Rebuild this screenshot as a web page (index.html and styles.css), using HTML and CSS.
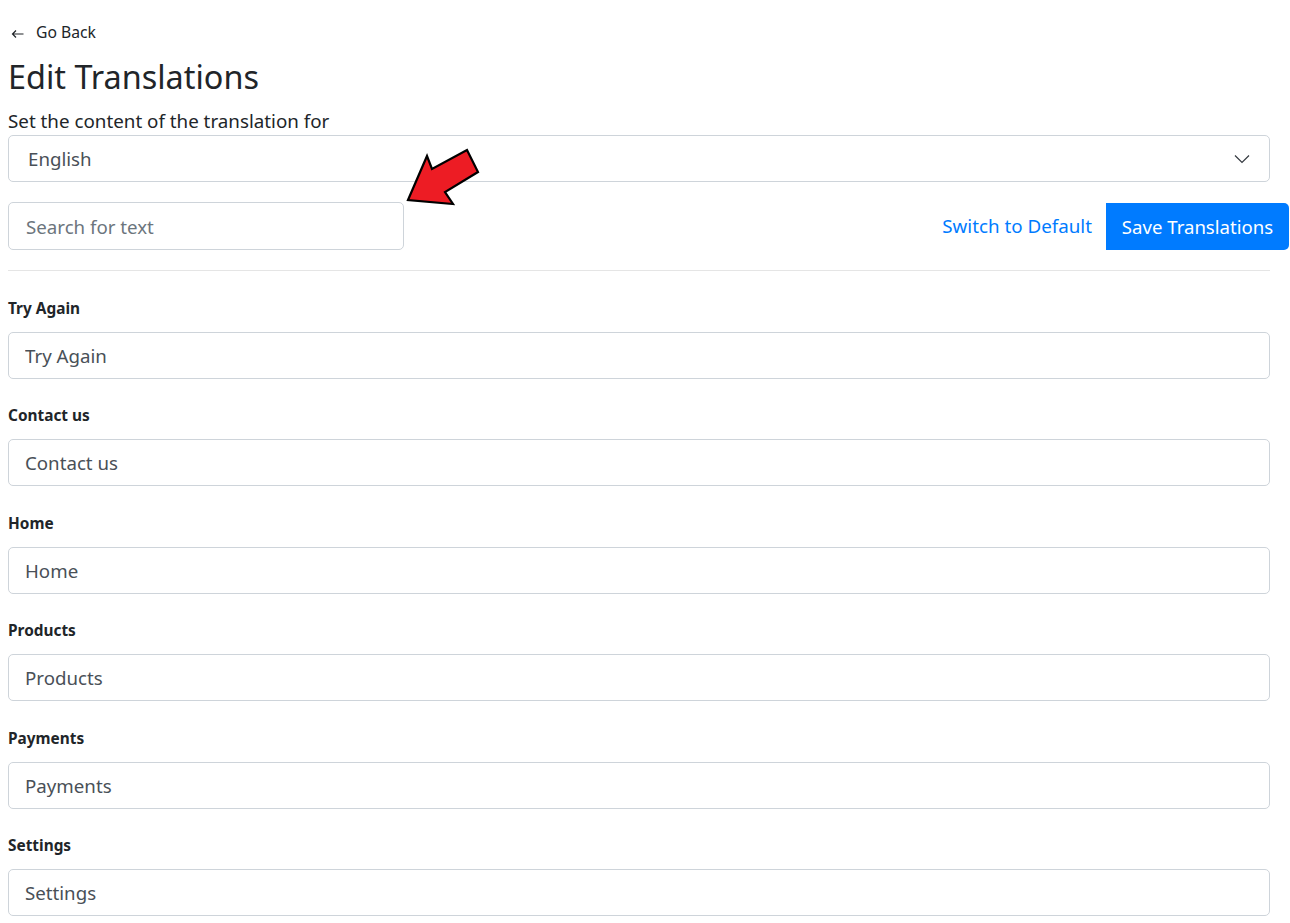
FILE: index.html
```html
<!DOCTYPE html>
<html lang="en">
<head>
<meta charset="utf-8">
<title>Edit Translations</title>
<link rel="stylesheet" href="styles.css">
</head>
<body>
<div class="page">
  <a class="back" href="#"><svg class="back-arrow" width="13" height="10" viewBox="0 0 13 10"><path d="M12.5 5 H1.5 M5 1.5 L1.5 5 L5 8.5" fill="none" stroke="#212529" stroke-width="1.2"/></svg><span>Go Back</span></a>
  <h1 class="title">Edit Translations</h1>
  <p class="subtitle">Set the content of the translation for</p>
  <div class="select">
    <span>English</span>
    <svg class="chev" width="16" height="10" viewBox="0 0 16 10"><path d="M1 1.5 L8 8.5 L15 1.5" fill="none" stroke="#343a40" stroke-width="1.2"/></svg>
  </div>
  <div class="toolbar">
    <input class="search" type="text" placeholder="Search for text">
    <div class="actions">
      <a class="link" href="#">Switch to Default</a>
      <button class="btn">Save Translations</button>
    </div>
    <svg class="pointer" width="90" height="70" viewBox="400 145 90 70">
      <polygon points="408,200 427,156 432,169 467,150 478,172 445,192 453,204" fill="#ed1c24" stroke="#000" stroke-width="2.2" stroke-linejoin="miter"/>
    </svg>
  </div>
  <hr class="rule">
  <div class="fields">
    <div class="field"><label>Try Again</label><input class="control" value="Try Again"></div>
    <div class="field"><label>Contact us</label><input class="control" value="Contact us"></div>
    <div class="field"><label>Home</label><input class="control" value="Home"></div>
    <div class="field"><label>Products</label><input class="control" value="Products"></div>
    <div class="field"><label>Payments</label><input class="control" value="Payments"></div>
    <div class="field"><label>Settings</label><input class="control" value="Settings"></div>
  </div>
</div>
</body>
</html>
```
FILE: styles.css
```css
* { box-sizing: border-box; }
html, body { margin: 0; padding: 0; background: #fff; }
body {
  font-family: "Noto Sans", "Open Sans", sans-serif;
  color: #212529;
  overflow: hidden;
}
.page {
  margin: 0 20px 0 8px;
  padding-top: 20px;
  position: relative;
}
.back {
  display: flex;
  align-items: center;
  gap: 12px;
  height: 24px;
  color: #212529;
  text-decoration: none;
  font-size: 15.7px;
}
.back-arrow { margin-left: 3px; margin-top: 3px; }
.title {
  margin: 12px 0 0;
  font-size: 32.4px;
  font-weight: 400;
  line-height: 40px;
}
.subtitle {
  margin: 12px 0 0;
  font-size: 18.8px;
  line-height: 27px;
}
.select {
  height: 47px;
  border: 1px solid #ced4da;
  border-radius: 5px;
  display: flex;
  align-items: center;
  justify-content: space-between;
  padding: 0 19px 0 19px;
  font-size: 18.7px;
  color: #495057;
}
.toolbar {
  margin-top: 20px;
  display: flex;
  align-items: center;
  justify-content: space-between;
  position: relative;
  margin-right: -19px;
}
.search {
  width: 396px;
  height: 48px;
  border: 1px solid #ced4da;
  border-radius: 5px;
  padding: 0 17px;
  font-family: inherit;
  font-size: 18.7px;
  color: #495057;
  outline: none;
}
.search::placeholder { color: #6c757d; }
.actions { display: flex; align-items: center; gap: 14px; }
.link {
  color: #007bff;
  text-decoration: none;
  font-size: 18.8px;
}
.btn {
  height: 47px;
  background: #007bff;
  color: #fff;
  border: none;
  border-radius: 0 5px 5px 0;
  padding: 0;
  font-family: inherit;
  font-size: 18.6px;
  width: 183px;
}
.pointer {
  position: absolute;
  left: 392px;
  top: -57px;
}
.rule {
  margin: 20px 0 0;
  border: 0;
  border-top: 1px solid #e5e5e5;
}
.fields { padding-top: 26.5px; display: flex; flex-direction: column; gap: 26.6px; }
.field { display: flex; flex-direction: column; gap: 12px; }
.field label {
  font-size: 15.4px;
  font-weight: 700;
  line-height: 22px;
}
.control {
  height: 47px;
  border: 1px solid #ced4da;
  border-radius: 5px;
  padding: 0 16px;
  font-family: inherit;
  font-size: 18.7px;
  color: #495057;
  outline: none;
  width: 100%;
}
```
